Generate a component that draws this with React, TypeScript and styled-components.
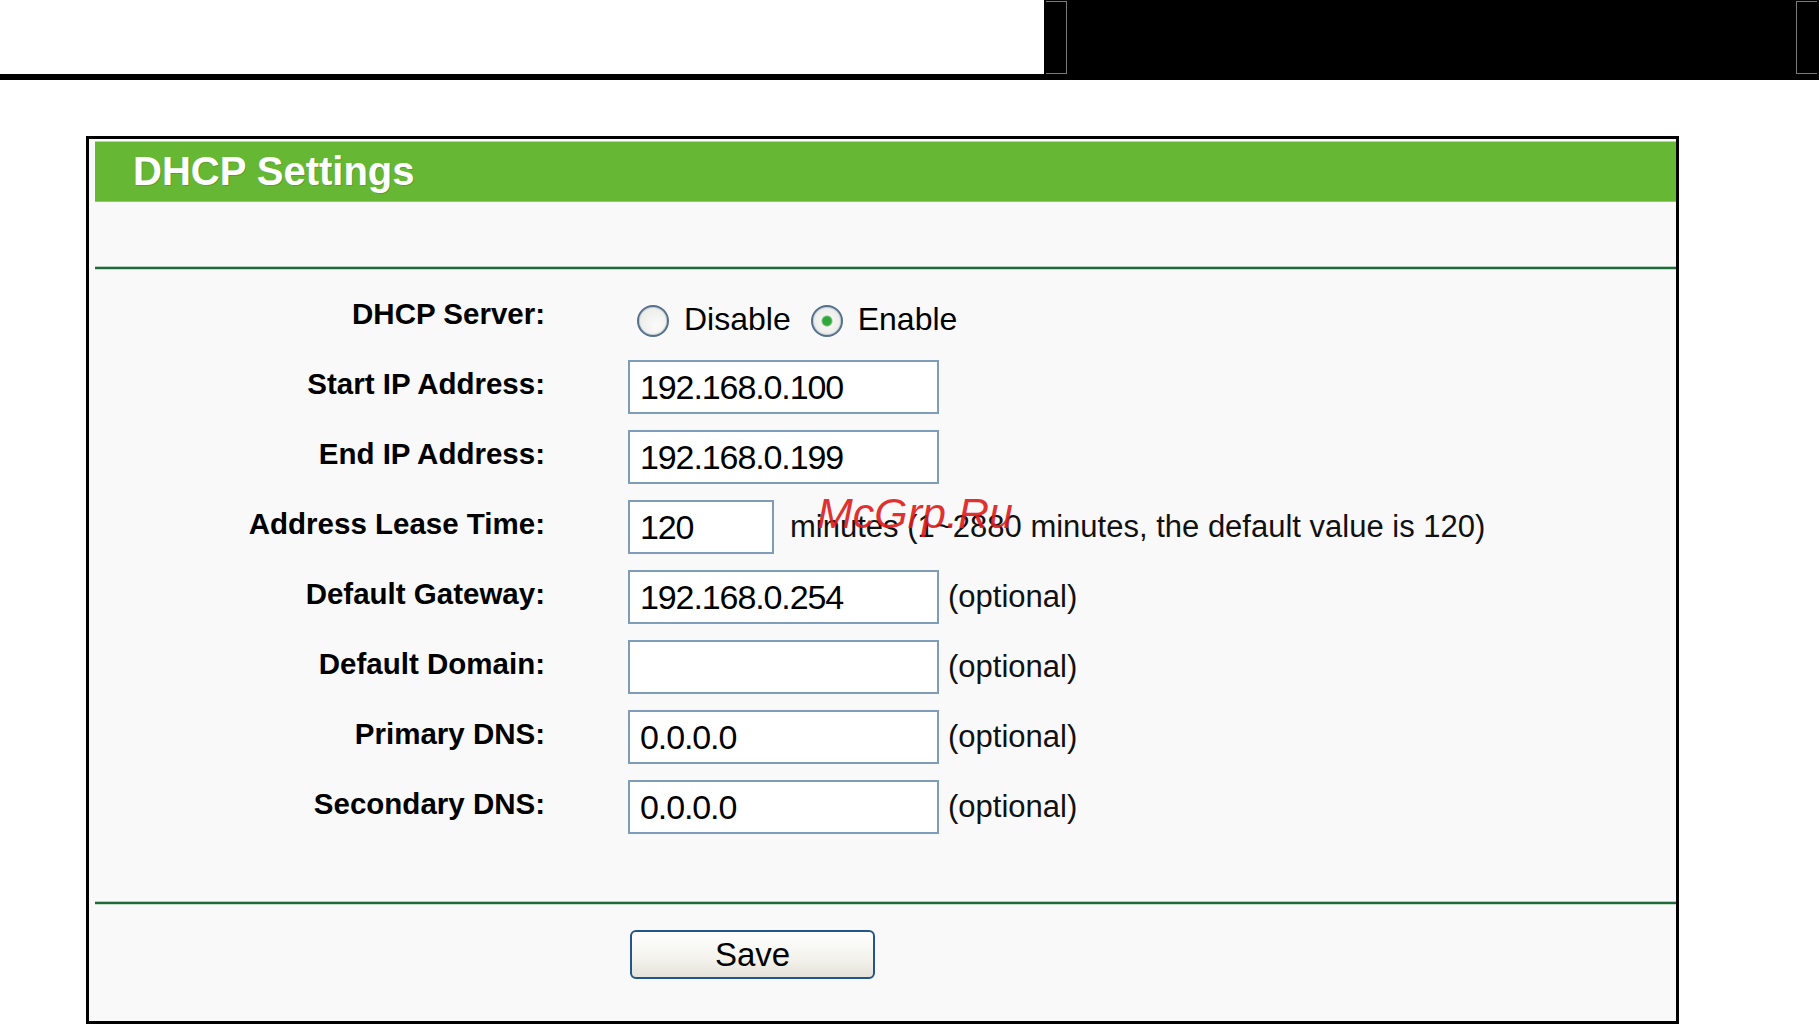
import { Fragment } from "react";
import styled, { createGlobalStyle } from "styled-components";

const GlobalStyle = createGlobalStyle`
  body {
    margin: 0;
    background: #fff;
    font-family: "Liberation Sans", Arial, sans-serif;
    color: #000;
  }
`

const TopBar = styled.div`
  display: flex;
  height: 80px;
`

const TopLeft = styled.div`
  width: 1044px;
  box-sizing: border-box;
  border-bottom: 6px solid #000;
  background: #fff;
`

const TopRight = styled.div`
  flex: 1;
  display: flex;
  justify-content: space-between;
  box-sizing: border-box;
  padding: 1px 2px 6px 2px;
  background: #000;
`

const Bracket = styled.span<{ $side: "left" | "right" }>`
  width: 21px;
  box-sizing: border-box;
  border: 1px solid #7a7a7a;
  ${(p) => (p.$side === "left" ? "border-left: 0;" : "border-right: 0;")}
`

const Panel = styled.div`
  position: relative;
  margin: 56px 0 0 86px;
  width: 1593px;
  height: 888px;
  box-sizing: border-box;
  border: 3px solid #000;
  padding: 2px 0 0 6px;
  background: #f9f9f9;
`

const Header = styled.div`
  height: 61px;
  box-sizing: border-box;
  border-top: 1px solid #b8d7a3;
  border-bottom: 1px solid #8ccf5c;
  background: #66b733;
  display: flex;
  align-items: center;
`

const Title = styled.h1`
  margin: 0 0 0 38px;
  font-size: 40px;
  font-weight: 700;
  color: #fff;
  text-shadow: 1px 1px 0 rgba(60, 80, 20, 0.25);
`

const Spacer = styled.div<{ $h: number }>`
  height: ${(p) => p.$h}px;
`

const Divider = styled.div`
  height: 4px;
  background: linear-gradient(
    #b6cfbd 0 25%,
    #1e6a3c 25% 75%,
    #c7dbcb 75% 100%
  );
`

const Form = styled.div`
  display: grid;
  grid-template-columns: 450px 1fr;
  grid-auto-rows: 70px;
  column-gap: 83px;
  align-items: center;
  margin: 12px 0 59px;
`

const Label = styled.div`
  text-align: right;
  font-size: 29.5px;
  font-weight: 700;
  margin-bottom: 6px;
`

const Field = styled.div`
  display: flex;
  align-items: center;
`

const RadioGroup = styled.div`
  display: flex;
  align-items: center;
  gap: 20px;
  padding: 8px 0 0 9px;
`

const RadioOption = styled.label`
  display: flex;
  align-items: center;
  gap: 15px;
  font-size: 32px;
`

const RadioText = styled.span`
  margin-bottom: 4px;
`

const RadioCircle = styled.span<{ $checked?: boolean }>`
  width: 32px;
  height: 32px;
  box-sizing: border-box;
  border-radius: 50%;
  border: 2px solid #56708a;
  background: ${(p) =>
    p.$checked
      ? "radial-gradient(circle, #2ea83a 0 4px, #7cc57f 5px, #f4f4f2 6px, #e6e6e2 100%)"
      : "radial-gradient(circle at 60% 65%, #fbfbfa 0, #e6e6e2 100%)"};
  box-shadow: inset 0 0 0 1px #c8d2dc;
`

const TextInput = styled.input<{ $width: number }>`
  width: ${(p) => p.$width}px;
  height: 54px;
  box-sizing: border-box;
  border: 2px solid #7f9db9;
  background: #fff;
  padding: 0 10px;
  font-family: "Liberation Sans", Arial, sans-serif;
  font-size: 34px;
  letter-spacing: -1.1px;
  color: #000;
  outline: 0;
`

const Hint = styled.span<{ $gap: number }>`
  margin-left: ${(p) => p.$gap}px;
  font-size: 31px;
  color: #111;
  white-space: nowrap;
`

const Footer = styled.div`
  padding: 25px 0 0 535px;
`

const SaveButton = styled.button`
  width: 245px;
  height: 49px;
  box-sizing: border-box;
  border: 2px solid #21558c;
  border-radius: 6px;
  background: linear-gradient(#ffffff, #f3f2ec 60%, #e4e2da);
  font-family: "Liberation Sans", Arial, sans-serif;
  font-size: 33px;
  color: #000;
  padding: 0;
`

const Watermark = styled.span`
  position: absolute;
  top: 353px;
  left: 728px;
  font-size: 43px;
  line-height: 1;
  font-style: italic;
  color: rgba(222, 28, 28, 0.92);
  pointer-events: none;
`

type Row = {
  label: string
  value: string
  width: number
  hint?: string
  gap?: number
}

const rows: Row[] = [
  { label: "Start IP Address:", value: "192.168.0.100", width: 311 },
  { label: "End IP Address:", value: "192.168.0.199", width: 311 },
  {
    label: "Address Lease Time:",
    value: "120",
    width: 146,
    hint: "minutes (1~2880 minutes, the default value is 120)",
    gap: 16,
  },
  { label: "Default Gateway:", value: "192.168.0.254", width: 311, hint: "(optional)", gap: 9 },
  { label: "Default Domain:", value: "", width: 311, hint: "(optional)", gap: 9 },
  { label: "Primary DNS:", value: "0.0.0.0", width: 311, hint: "(optional)", gap: 9 },
  { label: "Secondary DNS:", value: "0.0.0.0", width: 311, hint: "(optional)", gap: 9 },
]

export default function App() {
  return (
    <>
      <GlobalStyle />
      <TopBar>
        <TopLeft />
        <TopRight>
          <Bracket $side="left" />
          <Bracket $side="right" />
        </TopRight>
      </TopBar>
      <Panel>
        <Header>
          <Title>DHCP Settings</Title>
        </Header>
        <Spacer $h={64} />
        <Divider />
        <Form>
          <Label>DHCP Server:</Label>
          <RadioGroup>
            <RadioOption>
              <RadioCircle />
              <RadioText>Disable</RadioText>
            </RadioOption>
            <RadioOption>
              <RadioCircle $checked />
              <RadioText>Enable</RadioText>
            </RadioOption>
          </RadioGroup>
          {rows.map((r) => (
            <Fragment key={r.label}>
              <Label>{r.label}</Label>
              <Field>
                <TextInput $width={r.width} defaultValue={r.value} type="text" />
                {r.hint && <Hint $gap={r.gap ?? 9}>{r.hint}</Hint>}
              </Field>
            </Fragment>
          ))}
        </Form>
        <Divider />
        <Footer>
          <SaveButton>Save</SaveButton>
        </Footer>
        <Watermark>McGrp.Ru</Watermark>
      </Panel>
    </>
  )
}
